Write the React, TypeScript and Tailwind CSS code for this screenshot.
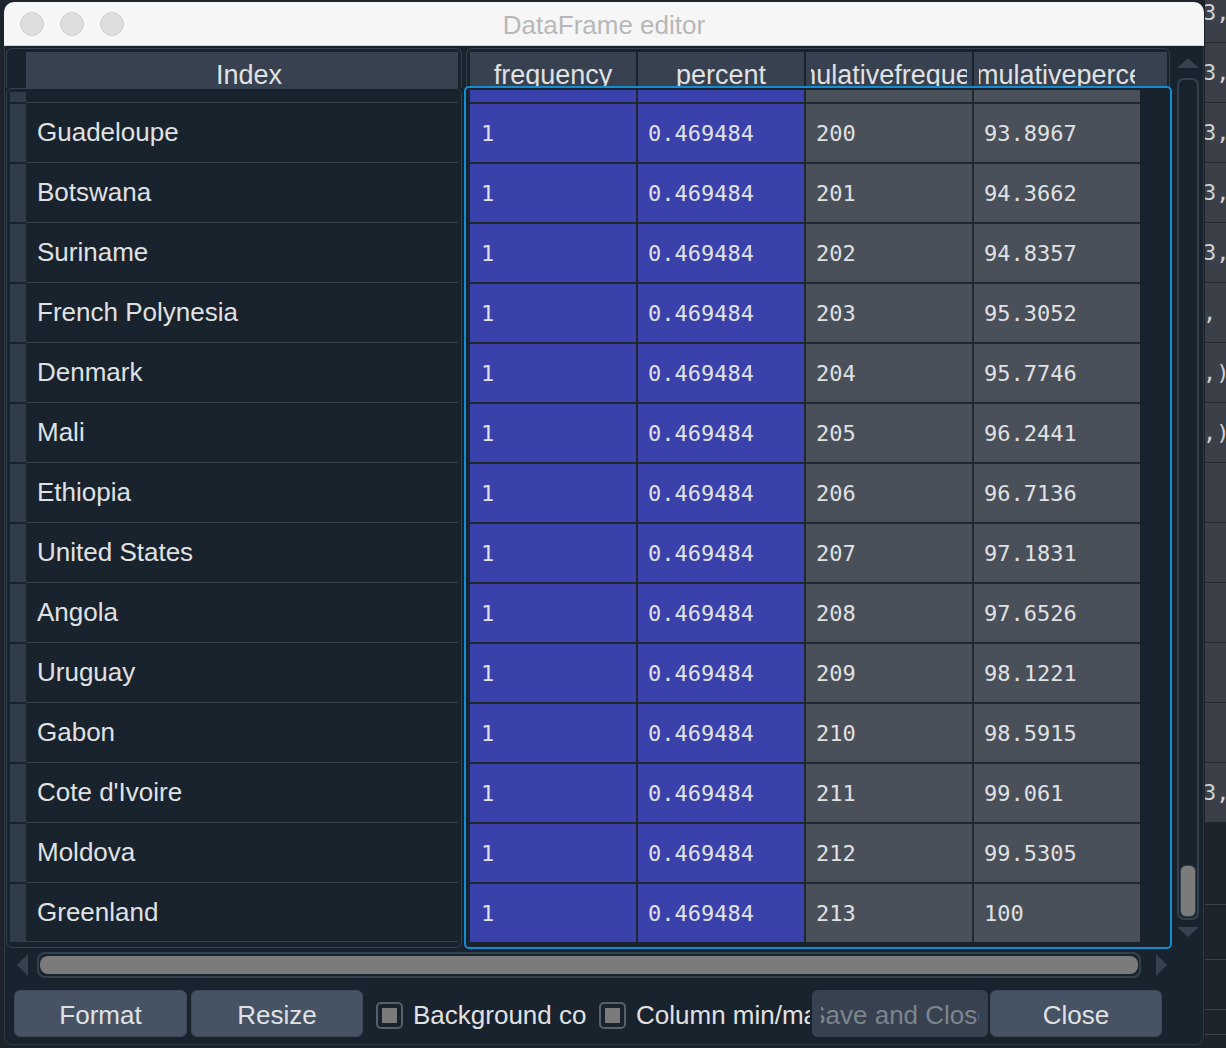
import { FC } from "react";

type TRow = { name: string; cumFreq: string; cumPct: string };

const rows: TRow[] = [
  { name: "Guadeloupe", cumFreq: "200", cumPct: "93.8967" },
  { name: "Botswana", cumFreq: "201", cumPct: "94.3662" },
  { name: "Suriname", cumFreq: "202", cumPct: "94.8357" },
  { name: "French Polynesia", cumFreq: "203", cumPct: "95.3052" },
  { name: "Denmark", cumFreq: "204", cumPct: "95.7746" },
  { name: "Mali", cumFreq: "205", cumPct: "96.2441" },
  { name: "Ethiopia", cumFreq: "206", cumPct: "96.7136" },
  { name: "United States", cumFreq: "207", cumPct: "97.1831" },
  { name: "Angola", cumFreq: "208", cumPct: "97.6526" },
  { name: "Uruguay", cumFreq: "209", cumPct: "98.1221" },
  { name: "Gabon", cumFreq: "210", cumPct: "98.5915" },
  { name: "Cote d'Ivoire", cumFreq: "211", cumPct: "99.061" },
  { name: "Moldova", cumFreq: "212", cumPct: "99.5305" },
  { name: "Greenland", cumFreq: "213", cumPct: "100" },
];

// what peeks out from behind the dialog on the right
const behind = ["3,", "3,", "3,", "3,", "3,", ",", ",)", ",)", "", "", "", "", "", "3,"];

const sans = "font-['Liberation_Sans',Arial,sans-serif]";
const mono = "font-['DejaVu_Sans_Mono',monospace]";

// header labels are wider than the column, Qt just clips them on both sides
const HeaderCell: FC<{ label: string }> = ({ label }) => (
  <div className="flex h-full w-[166px] justify-center bg-[#37414f] pt-[3px]">
    <div className="flex w-[156px] justify-center overflow-hidden whitespace-nowrap">
      <span className="shrink-0">{label}</span>
    </div>
  </div>
);

const Checkbox: FC<{ label: string; width: string }> = ({ label, width }) => (
  <div className="flex items-center">
    <div className="flex h-[27px] w-[27px] items-center justify-center rounded-[5px] border-2 border-[#56616d]">
      <div className="h-[15px] w-[15px] bg-[#7b7b7b]" />
    </div>
    <div className={`ml-[10px] overflow-hidden whitespace-nowrap ${width}`}>{label}</div>
  </div>
);

const App: FC = () => {
  return (
    <div className={`flex h-[1048px] w-[1226px] overflow-hidden bg-[#1d242c] ${sans}`}>
      <div className="w-[4px] shrink-0" />

      {/* dialog window */}
      <div className="mt-[2px] flex h-[1043px] w-[1200px] shrink-0 flex-col overflow-hidden rounded-t-[10px]">
        <div className="grid h-[44px] grid-cols-[120px_1fr_120px] items-center border-b border-[#d4d4d4] bg-[#f6f6f6]">
          <div className="flex gap-[16px] pl-[16px]">
            <div className="h-[24px] w-[24px] rounded-full border border-[#d0d0d0] bg-[#dedede]" />
            <div className="h-[24px] w-[24px] rounded-full border border-[#d0d0d0] bg-[#dedede]" />
            <div className="h-[24px] w-[24px] rounded-full border border-[#d0d0d0] bg-[#dedede]" />
          </div>
          <div className="pt-[3px] text-center text-[26px] text-[#b8b8b8]">DataFrame editor</div>
          <div />
        </div>

        <div className="flex flex-1 flex-col rounded-b-[8px] border-x border-b border-[#2e3945] bg-[#19232d] pl-[1px] text-[26px] text-[#e0e1e3]">
          <div className="mt-[2px] flex h-[901px]">
            {/* index */}
            <div className="flex w-[456px] flex-col">
              <div className="flex h-[40px] rounded-t-[6px] border border-b-0 border-[#32414b] pr-[3px] pt-[3px]">
                <div className="w-[19px]" />
                <div className="flex flex-1 justify-center overflow-hidden bg-[#37414f] pl-[14px] pt-[3px] text-[27px]">Index</div>
              </div>
              <div className="h-[860px] rounded-[6px] border border-[#32414b] pl-[3px] pr-[3px] pt-[1px]">
                <div className="flex h-[12px]">
                  <div className="mt-[2px] h-[10px] w-[16px] bg-[#303c48]" />
                  <div className="flex-1" />
                </div>
                {rows.map((r, i) => (
                  <div key={r.name} className="flex h-[60px]">
                    <div className="mt-[2px] w-[16px] bg-[#303c48]" />
                    <div
                      className={`flex flex-1 items-center border-t border-[#32414b] pl-[11px] ${i === rows.length - 1 ? "border-b" : ""}`}
                    >
                      {r.name}
                    </div>
                  </div>
                ))}
              </div>
            </div>

            {/* data */}
            <div className="ml-[2px] flex w-[708px] flex-col">
              <div className="mx-[2px] flex h-[40px] gap-[2px] overflow-hidden rounded-t-[6px] border border-b-0 border-[#32414b] pl-[3px] pr-[2px] pt-[3px] text-[27px]">
                <HeaderCell label="frequency" />
                <HeaderCell label="percent" />
                <HeaderCell label="cumulativefrequency" />
                <div className="flex h-full flex-1 bg-[#37414f]">
                  <HeaderCell label="cumulativepercent" />
                </div>
              </div>
              <div className="-mt-[2px] h-[863px] rounded-[5px] border-2 border-[#148cd2] pl-[4px] pt-[2px]">
                <div className={`flex w-[670px] flex-col gap-[2px] bg-[#22282f] text-[22px] ${mono}`}>
                  <div className="grid h-[12px] grid-cols-4 gap-[2px]">
                    <div className="bg-[#3a41ab]" />
                    <div className="bg-[#3a41ab]" />
                    <div className="bg-[#4a5059]" />
                    <div className="bg-[#4a5059]" />
                  </div>
                  {rows.map((r) => (
                    <div key={r.name} className="grid h-[58px] grid-cols-4 gap-[2px]">
                      <div className="flex items-center bg-[#3a41ab] pl-[11px]">1</div>
                      <div className="flex items-center bg-[#3a41ab] pl-[10px]">0.469484</div>
                      <div className="flex items-center bg-[#4a5059] pl-[10px]">{r.cumFreq}</div>
                      <div className="flex items-center bg-[#4a5059] pl-[10px]">{r.cumPct}</div>
                    </div>
                  ))}
                </div>
              </div>
            </div>

            {/* vertical scrollbar */}
            <div className="ml-[5px] flex w-[22px] flex-col items-center">
              <div className="mt-[10px] h-0 w-0 border-x-[11px] border-b-[10px] border-x-transparent border-b-[#37424f]" />
              <div className="mt-[10px] flex h-[842px] w-[22px] flex-col justify-end rounded-[7px] border-2 border-[#32414b] p-[1px]">
                <div className="h-[52px] rounded-[6px] border border-[#32414b] bg-[#7b7b7b]" />
              </div>
              <div className="mt-[7px] h-0 w-0 border-x-[11px] border-t-[10px] border-x-transparent border-t-[#37424f]" />
            </div>
          </div>

          {/* horizontal scrollbar */}
          <div className="mt-[3px] flex h-[26px] items-center pl-[11px]">
            <div className="h-0 w-0 border-y-[11px] border-r-[11px] border-y-transparent border-r-[#37424f]" />
            <div className="ml-[9px] flex h-[26px] w-[1104px] items-center rounded-[8px] border-2 border-[#32414b] px-[1px]">
              <div className="h-[18px] w-full rounded-[8px] bg-[#7b7b7b]" />
            </div>
            <div className="ml-[15px] h-0 w-0 border-y-[11px] border-l-[11px] border-y-transparent border-l-[#37424f]" />
          </div>

          {/* buttons */}
          <div className="mt-[12px] flex h-[47px] items-center pl-[8px]">
            <div className="flex h-full w-[173px] items-center justify-center rounded-[6px] border border-[#3d4957] bg-[#455364] pt-[3px]">Format</div>
            <div className="ml-[4px] flex h-full w-[172px] items-center justify-center rounded-[6px] border border-[#3d4957] bg-[#455364] pt-[3px]">Resize</div>
            <div className="ml-[13px] pt-[3px]">
              <Checkbox label="Background color" width="w-[174px]" />
            </div>
            <div className="ml-[12px] pt-[3px]">
              <Checkbox label="Column min/max" width="w-[174px]" />
            </div>
            <div className="ml-[2px] flex h-full w-[176px] items-center justify-center rounded-[6px] bg-[#37414f] pt-[3px] text-[#7d858e]">
              <div className="flex w-[158px] justify-center overflow-hidden whitespace-nowrap">
                <span className="shrink-0">Save and Close</span>
              </div>
            </div>
            <div className="ml-[2px] flex h-full w-[172px] items-center justify-center rounded-[6px] border border-[#3d4957] bg-[#455364] pt-[3px]">Close</div>
          </div>
        </div>
      </div>

      {/* content behind the dialog */}
      <div className="flex w-[22px] shrink-0 flex-col overflow-hidden border-l border-[#1a1f25]">
        <div className={`-mt-[17px] flex flex-col text-[22px] text-[#cfd1d4] ${mono}`}>
          {behind.map((t, i) => (
            <div key={i} className="-ml-[2px] flex h-[60px] items-center whitespace-nowrap border-b border-[#23282e] bg-[#3b4048]">
              {t}
            </div>
          ))}
        </div>
        <div className="mt-[81px] border-t border-[#39414a]" />
        <div className="mt-[54px] border-t border-[#39414a]" />
        <div className="mt-[49px] border-t border-[#39414a]" />
        <div className="mt-[24px] border-t border-[#39414a]" />
      </div>
    </div>
  );
};

export default App;
